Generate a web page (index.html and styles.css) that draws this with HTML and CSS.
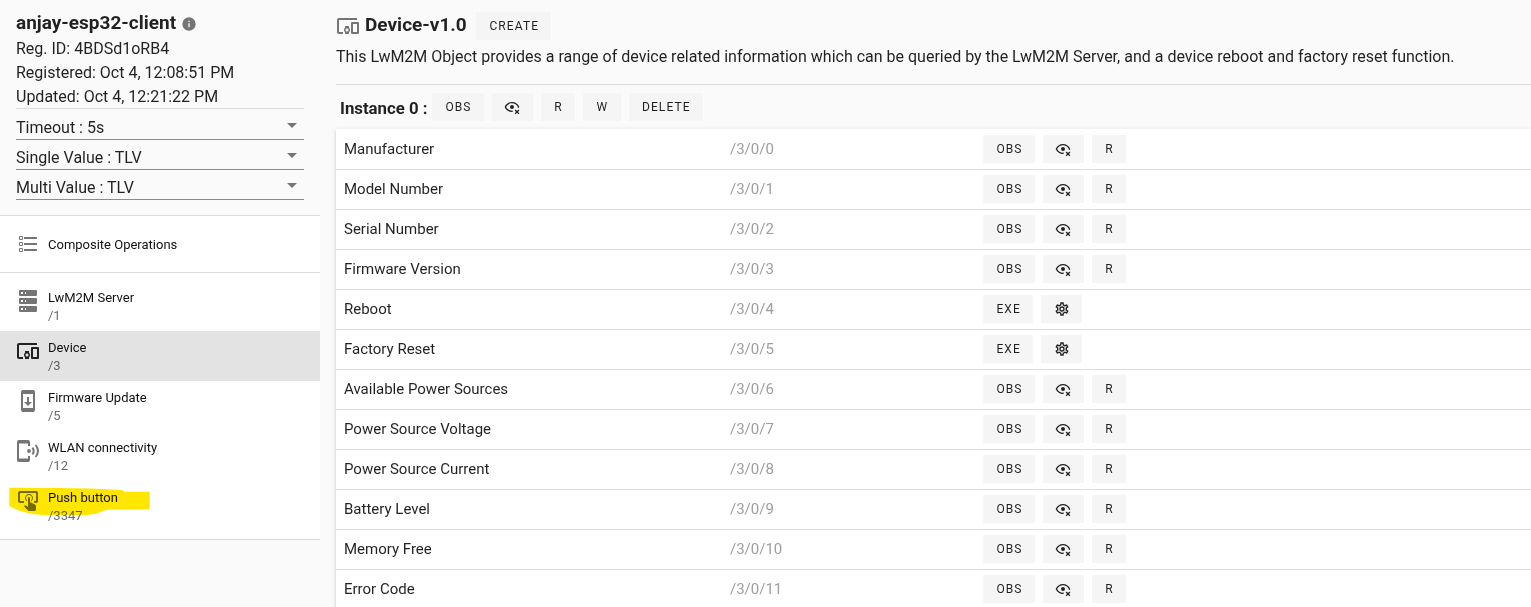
FILE: index.html
```
<!DOCTYPE html>
<html lang="en">
<head>
<meta charset="utf-8">
<title>anjay-esp32-client</title>
<link rel="stylesheet" href="styles.css">
</head>
<body>
<svg class="sprite" aria-hidden="true">
  <symbol id="devices" viewBox="0 0 24 24"><path d="M3 6H21V4H3C1.9 4 1 4.9 1 6V18C1 19.1 1.9 20 3 20H7V18H3V6M13 12H9V13.78C8.39 14.33 8 15.11 8 16C8 16.89 8.39 17.67 9 18.22V20H13V18.22C13.61 17.67 14 16.88 14 16S13.61 14.33 13 13.78V12M11 17.5C10.17 17.5 9.5 16.83 9.5 16S10.17 14.5 11 14.5 12.5 15.17 12.5 16 11.83 17.5 11 17.5M22 8H16C15.5 8 15 8.5 15 9V19C15 19.5 15.5 20 16 20H22C22.5 20 23 19.5 23 19V9C23 8.5 22.5 8 22 8M21 18H17V10H21V18Z"/></symbol>
  <symbol id="info" viewBox="0 0 24 24"><path d="M13,9H11V7H13M13,17H11V11H13M12,2A10,10 0 0,0 2,12A10,10 0 0,0 12,22A10,10 0 0,0 22,12A10,10 0 0,0 12,2Z"/></symbol>
  <symbol id="list" viewBox="0 0 24 24"><path d="M21,19V17H8V19H21M21,13V11H8V13H21M8,7H21V5H8V7M4,5V7H6V5H4M3,5A1,1 0 0,1 4,4H6A1,1 0 0,1 7,5V7A1,1 0 0,1 6,8H4A1,1 0 0,1 3,7V5M4,11V13H6V11H4M3,11A1,1 0 0,1 4,10H6A1,1 0 0,1 7,11V13A1,1 0 0,1 6,14H4A1,1 0 0,1 3,13V11M4,17V19H6V17H4M3,17A1,1 0 0,1 4,16H6A1,1 0 0,1 7,17V19A1,1 0 0,1 6,20H4A1,1 0 0,1 3,19V17Z"/></symbol>
  <symbol id="server" viewBox="0 0 24 24"><path d="M4,1H20A1,1 0 0,1 21,2V6A1,1 0 0,1 20,7H4A1,1 0 0,1 3,6V2A1,1 0 0,1 4,1M4,9H20A1,1 0 0,1 21,10V14A1,1 0 0,1 20,15H4A1,1 0 0,1 3,14V10A1,1 0 0,1 4,9M4,17H20A1,1 0 0,1 21,18V22A1,1 0 0,1 20,23H4A1,1 0 0,1 3,22V18A1,1 0 0,1 4,17M9,5H10V3H9V5M9,13H10V11H9V13M9,21H10V19H9V21M5,3V5H7V3H5M5,11V13H7V11H5M5,19V21H7V19H5Z"/></symbol>
  <symbol id="firmware" viewBox="0 0 24 24"><path d="M17,1H7A2,2 0 0,0 5,3V21A2,2 0 0,0 7,23H17A2,2 0 0,0 19,21V3A2,2 0 0,0 17,1M17,19H7V5H17V19M16,13H13V8H11V13H8L12,17L16,13Z"/></symbol>
  <symbol id="wireless" viewBox="0 0 24 24"><path d="M3,1H12A2,2 0 0,1 14,3V7H12V4.5H3V19.5H12V17H14V21A2,2 0 0,1 12,23H3A2,2 0 0,1 1,21V3A2,2 0 0,1 3,1Z"/><circle cx="13" cy="12" r="1.9"/><path class="arc" d="M16.4 8.6Q19 12 16.4 15.4M19.6 6Q24.4 12 19.6 18"/></symbol>
  <symbol id="tap" viewBox="0 0 24 24"><path d="M13 5C15.21 5 17 6.79 17 9C17 10.5 16.2 11.77 15 12.46V11.24C15.61 10.69 16 9.89 16 9C16 7.34 14.66 6 13 6S10 7.34 10 9C10 9.89 10.39 10.69 11 11.24V12.46C9.8 11.77 9 10.5 9 9C9 6.79 10.79 5 13 5M20 20.5C19.97 21.32 19.32 21.97 18.5 22H13C12.62 22 12.26 21.85 12 21.57L8 17.37L8.74 16.6C8.93 16.39 9.2 16.28 9.5 16.28H9.7L12 18V9C12 8.45 12.45 8 13 8S14 8.45 14 9V13.47L15.21 13.6L19.15 15.79C19.68 16.03 20 16.56 20 17.14V20.5M20 2H4C2.9 2 2 2.9 2 4V12C2 13.11 2.9 14 4 14H8V12L4 12L4 4H20L20 12H18V14H20V13.97L20.04 14C21.13 13.97 22 13.09 22 12V4C22 2.9 21.11 2 20 2Z"/></symbol>
  <symbol id="eye" viewBox="0 0 24 24"><path d="M12 17.5C8.2 17.5 4.8 15.4 3.2 12C4.8 8.6 8.2 6.5 12 6.5S19.2 8.6 20.8 12C20.7 12.2 20.5 12.4 20.4 12.7C21 12.9 21.5 13.2 22 13.6C22.4 13.1 22.7 12.6 23 12C21.3 7.6 17 4.5 12 4.5S2.7 7.6 1 12C2.7 16.4 7 19.5 12 19.5C12.4 19.5 12.7 19.5 13.1 19.5C13 19.2 13 18.9 13 18.5C13 18.1 13 17.8 13.1 17.4C12.7 17.4 12.4 17.5 12 17.5M12 9A3 3 0 1 0 12 15A3 3 0 0 0 12 9M23 17.3L21.6 15.9L19.5 18L17.4 15.9L16 17.3L18.1 19.4L16 21.5L17.4 22.9L19.5 20.8L21.6 22.9L23 21.5L20.9 19.4Z"/></symbol>
  <symbol id="cog" viewBox="0 0 24 24"><path d="M12,8A4,4 0 0,1 16,12A4,4 0 0,1 12,16A4,4 0 0,1 8,12A4,4 0 0,1 12,8M12,10A2,2 0 0,0 10,12A2,2 0 0,0 12,14A2,2 0 0,0 14,12A2,2 0 0,0 12,10M10,22C9.75,22 9.54,21.82 9.5,21.58L9.13,18.93C8.5,18.68 7.96,18.34 7.44,17.94L4.95,18.95C4.73,19.03 4.46,18.95 4.34,18.73L2.34,15.27C2.21,15.05 2.27,14.78 2.46,14.63L4.57,12.97L4.5,12L4.57,11L2.46,9.37C2.27,9.22 2.21,8.95 2.34,8.73L4.34,5.27C4.46,5.05 4.73,4.96 4.95,5.05L7.44,6.05C7.96,5.66 8.5,5.32 9.13,5.07L9.5,2.42C9.54,2.18 9.75,2 10,2H14C14.25,2 14.46,2.18 14.5,2.42L14.87,5.07C15.5,5.32 16.04,5.66 16.56,6.05L19.05,5.05C19.27,4.96 19.54,5.05 19.66,5.27L21.66,8.73C21.79,8.95 21.73,9.22 21.54,9.37L19.43,11L19.5,12L19.43,13L21.54,14.63C21.73,14.78 21.79,15.05 21.66,15.27L19.66,18.73C19.54,18.95 19.27,19.04 19.05,18.95L16.56,17.95C16.04,18.34 15.5,18.68 14.87,18.93L14.5,21.58C14.46,21.82 14.25,22 14,22H10M11.25,4L10.88,6.61C9.68,6.86 8.62,7.5 7.85,8.39L5.44,7.35L4.69,8.65L6.8,10.2C6.4,11.37 6.4,12.64 6.8,13.8L4.68,15.36L5.43,16.66L7.86,15.62C8.63,16.5 9.68,17.14 10.87,17.38L11.24,20H12.76L13.13,17.39C14.32,17.14 15.37,16.5 16.14,15.62L18.57,16.66L19.32,15.36L17.2,13.81C17.6,12.64 17.6,11.37 17.2,10.2L19.31,8.65L18.56,7.35L16.15,8.39C15.38,7.5 14.32,6.86 13.12,6.62L12.75,4H11.25Z"/></symbol>
  <symbol id="caret" viewBox="0 0 24 24"><path d="M7,10L12,15L17,10H7Z"/></symbol>
</svg>
<div class="app">
  <aside class="sidebar">
    <header class="client">
      <h1 class="client-name">anjay-esp32-client <svg class="icon info"><use href="#info"/></svg></h1>
      <div class="meta">Reg. ID: 4BDSd1oRB4</div>
      <div class="meta">Registered: Oct 4, 12:08:51 PM</div>
      <div class="meta">Updated: Oct 4, 12:21:22 PM</div>
      <div class="selects">
        <div class="select"><span>Timeout : 5s</span><svg class="icon"><use href="#caret"/></svg></div>
        <div class="select"><span>Single Value : TLV</span><svg class="icon"><use href="#caret"/></svg></div>
        <div class="select"><span>Multi Value : TLV</span><svg class="icon"><use href="#caret"/></svg></div>
      </div>
    </header>
    <a class="composite"><svg class="icon"><use href="#list"/></svg><span class="label">Composite Operations</span></a>
    <nav class="objects">
      <a class="object"><svg class="icon"><use href="#server"/></svg><span><span class="label">LwM2M Server</span><span class="oid">/1</span></span></a>
      <a class="object active"><svg class="icon"><use href="#devices"/></svg><span><span class="label">Device</span><span class="oid">/3</span></span></a>
      <a class="object"><svg class="icon"><use href="#firmware"/></svg><span><span class="label">Firmware Update</span><span class="oid">/5</span></span></a>
      <a class="object"><svg class="icon"><use href="#wireless"/></svg><span><span class="label">WLAN connectivity</span><span class="oid">/12</span></span></a>
      <a class="object"><svg class="icon"><use href="#tap"/></svg><span><span class="label">Push button</span><span class="oid">/3347</span></span>
        <svg class="marker" viewBox="0 0 160 40"><path d="M9.3 6.7L60 7Q100 7.5 123 9.2L124 10.7H149.7V28.5H110Q103 29 98 32Q92 34 82 34H45Q24 33.5 9.3 25Z"/></svg></a>
    </nav>
  </aside>
  <main class="content">
    <div class="object-head"><svg class="icon"><use href="#devices"/></svg><h2>Device-v1.0</h2><button class="btn">CREATE</button></div>
    <p class="description">This LwM2M Object provides a range of device related information which can be queried by the LwM2M Server, and a device reboot and factory reset function.</p>
    <div class="instance"><h3>Instance 0 :</h3><div class="actions"><button class="btn">OBS</button><button class="btn"><svg class="icon"><use href="#eye"/></svg></button><button class="btn">R</button><button class="btn">W</button><button class="btn">DELETE</button></div></div>
    <div class="resources">
      <div class="row"><span>Manufacturer</span><span class="path">/3/0/0</span><div class="actions"><button class="btn">OBS</button><button class="btn"><svg class="icon"><use href="#eye"/></svg></button><button class="btn">R</button></div></div>
      <div class="row"><span>Model Number</span><span class="path">/3/0/1</span><div class="actions"><button class="btn">OBS</button><button class="btn"><svg class="icon"><use href="#eye"/></svg></button><button class="btn">R</button></div></div>
      <div class="row"><span>Serial Number</span><span class="path">/3/0/2</span><div class="actions"><button class="btn">OBS</button><button class="btn"><svg class="icon"><use href="#eye"/></svg></button><button class="btn">R</button></div></div>
      <div class="row"><span>Firmware Version</span><span class="path">/3/0/3</span><div class="actions"><button class="btn">OBS</button><button class="btn"><svg class="icon"><use href="#eye"/></svg></button><button class="btn">R</button></div></div>
      <div class="row"><span>Reboot</span><span class="path">/3/0/4</span><div class="actions"><button class="btn">EXE</button><button class="btn"><svg class="icon"><use href="#cog"/></svg></button></div></div>
      <div class="row"><span>Factory Reset</span><span class="path">/3/0/5</span><div class="actions"><button class="btn">EXE</button><button class="btn"><svg class="icon"><use href="#cog"/></svg></button></div></div>
      <div class="row"><span>Available Power Sources</span><span class="path">/3/0/6</span><div class="actions"><button class="btn">OBS</button><button class="btn"><svg class="icon"><use href="#eye"/></svg></button><button class="btn">R</button></div></div>
      <div class="row"><span>Power Source Voltage</span><span class="path">/3/0/7</span><div class="actions"><button class="btn">OBS</button><button class="btn"><svg class="icon"><use href="#eye"/></svg></button><button class="btn">R</button></div></div>
      <div class="row"><span>Power Source Current</span><span class="path">/3/0/8</span><div class="actions"><button class="btn">OBS</button><button class="btn"><svg class="icon"><use href="#eye"/></svg></button><button class="btn">R</button></div></div>
      <div class="row"><span>Battery Level</span><span class="path">/3/0/9</span><div class="actions"><button class="btn">OBS</button><button class="btn"><svg class="icon"><use href="#eye"/></svg></button><button class="btn">R</button></div></div>
      <div class="row"><span>Memory Free</span><span class="path">/3/0/10</span><div class="actions"><button class="btn">OBS</button><button class="btn"><svg class="icon"><use href="#eye"/></svg></button><button class="btn">R</button></div></div>
      <div class="row"><span>Error Code</span><span class="path">/3/0/11</span><div class="actions"><button class="btn">OBS</button><button class="btn"><svg class="icon"><use href="#eye"/></svg></button><button class="btn">R</button></div></div>
    </div>
  </main>
</div>
</body>
</html>
```
FILE: styles.css
```
* { box-sizing: border-box; }
body { margin: 0; background: #fafafa; color: rgba(0,0,0,.87); font: 16px/24px Roboto, sans-serif; overflow: hidden; }
.sprite { display: none; }
.icon { width: 24px; height: 24px; fill: currentColor; flex: none; display: block; }
.arc { fill: none; stroke: currentColor; stroke-width: 2; }
.app { display: grid; grid-template-columns: 320px minmax(0, 1fr); height: 607px; }
h1, h2, h3, p { margin: 0; }

.client { height: 216px; padding: 9px 16px 0; border-bottom: 1px solid #dcdcdc; }
.client-name { display: flex; align-items: center; gap: 5px; height: 28px; font-size: 19px; font-weight: 700; }
.info { width: 16px; height: 16px; color: #757575; margin-top: 2px; }
.selects { border-top: 1px solid #dcdcdc; margin-top: -1px; padding-top: 1px; }
.select { height: 30px; display: flex; justify-content: space-between; border-bottom: 1px solid #8c8c8c; padding-top: 6px; }
.select .icon { color: #757575; margin-top: -3px; }
.composite { display: flex; align-items: center; gap: 8px; height: 57px; padding: 0 16px; background: #fff; border-bottom: 1px solid #dcdcdc; }
.composite .icon, .object .icon { color: #757575; }
.composite .label { padding-top: 2px; }
.objects { padding: 8px 0; background: #fff; border-bottom: 1px solid #dcdcdc; }
.object { position: relative; display: flex; gap: 8px; height: 50px; padding: 8px 16px; }
.object.active { background: #e3e3e3; }
.object.active .icon { color: #212121; }
.object .label { padding-top: 1px; }
.label { display: block; font-size: 13px; line-height: 16px; color: #111; }
.oid { display: block; font-size: 13px; line-height: 16px; margin-top: 2px; color: rgba(0,0,0,.6); }
.marker { position: absolute; left: 0; top: 0; width: 160px; height: 40px; fill: #ffe600; mix-blend-mode: multiply; }

.content { padding: 12px 0 0 16px; overflow: hidden; }
.object-head { display: flex; align-items: center; height: 28px; color: rgba(0,0,0,.87); }
.object-head .icon { color: #757575; }
.object-head h2 { width: 102px; font-size: 19px; font-weight: 700; margin: -3px 9px 0 5px; white-space: nowrap; }
.description { height: 45px; padding-top: 5px; border-bottom: 1px solid #dcdcdc; }
.instance { display: flex; align-items: center; height: 44px; padding-left: 4px; }
.instance h3 { width: 88px; font-size: 16.8px; font-weight: 700; margin-right: 4px; padding-top: 1px; white-space: nowrap; }
.actions { display: flex; gap: 8px; }
.btn { height: 28px; padding: 0 12.4px 0 13.4px; border: 0; background: #f5f5f5; color: rgba(0,0,0,.87); font: 400 12px/28px Roboto, sans-serif; letter-spacing: 1.1px; }
.btn .icon { width: 16px; height: 16px; margin-left: -1px; }
.resources { padding-top: 1px; background: #fff; box-shadow: 0 3px 1px -2px rgba(0,0,0,.2), 0 2px 2px rgba(0,0,0,.14), 0 1px 5px rgba(0,0,0,.12); }
.row { display: grid; grid-template-columns: 386px 253px 1fr; align-items: center; height: 40px; padding: 0 0 2px 8px; border-bottom: 1px solid #dcdcdc; font-size: 15px; }
.path { color: #9e9e9e; }
```
